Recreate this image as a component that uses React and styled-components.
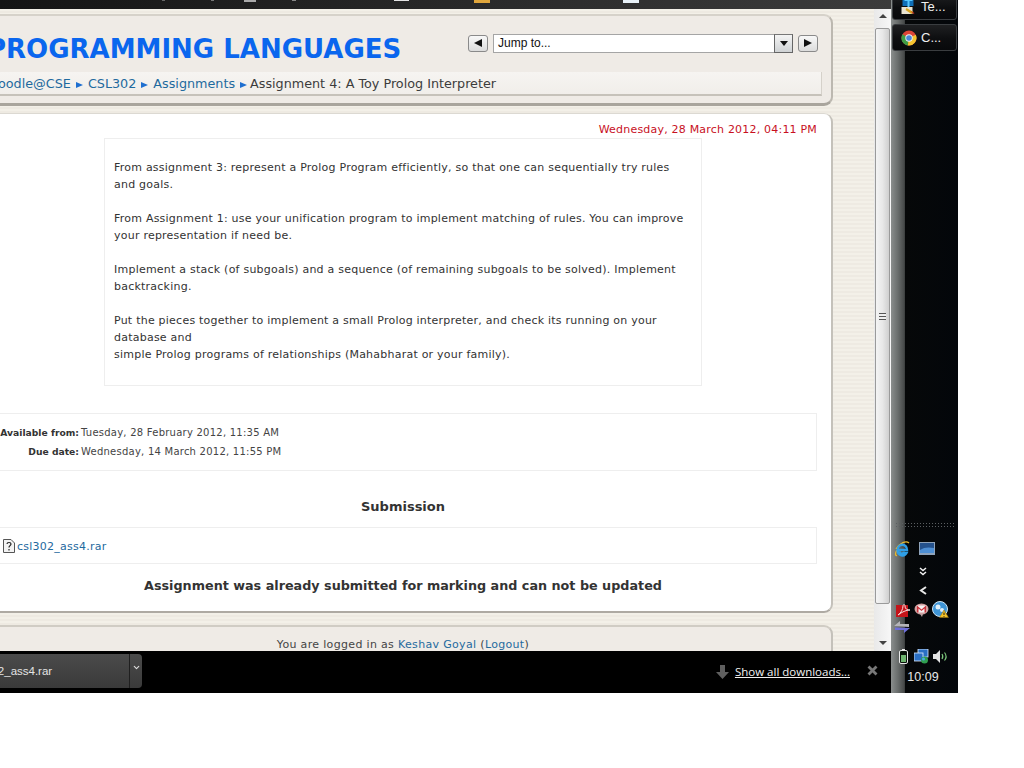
import React from 'react';
import styled, { createGlobalStyle } from 'styled-components';
import { ChevronDown } from 'lucide-react';

const Global = createGlobalStyle`
  html, body { margin: 0; padding: 0; background: #fff; }
  body { font-family: "DejaVu Sans", Verdana, sans-serif; overflow: hidden; }
`;

const Screen = styled.div`
  display: flex;
  width: 958px;
  height: 693px;
  overflow: hidden;
`;

const Browser = styled.div`
  display: flex;
  flex-direction: column;
  width: 891px;
  height: 693px;
`;

const TopStrip = styled.div`
  display: flex;
  flex: none;
  height: 9px;
  background: linear-gradient(90deg, #141414 0%, #262626 45%, #3c3c3c 100%);
  overflow: hidden;
`;

const Speck = styled.span`
  flex: none;
  margin-left: ${({ $gap }) => $gap}px;
  width: ${({ $w }) => $w}px;
  height: ${({ $h }) => $h}px;
  background: ${({ $c }) => $c};
`;

const Viewport = styled.div`
  display: flex;
  flex: none;
  height: 642px;
  background: repeating-linear-gradient(0deg, #f3f0e8 0 2px, #eeeae2 2px 4px);
  overflow: hidden;
`;

const Page = styled.div`
  display: flex;
  flex-direction: column;
  gap: 7px;
  flex: none;
  width: 858px;
  margin-left: -25px;
  margin-right: 41px;
  padding-top: 5px;
`;

const HeaderPanel = styled.div`
  flex: none;
  height: 92px;
  box-sizing: border-box;
  background: #efebe6;
  border-radius: 9px;
  border-top: 2px solid #d6d2ca;
  border-right: 2px solid #bcb8b0;
  border-bottom: 3px solid #a9a59d;
`;

const HeaderTop = styled.div`
  display: flex;
  align-items: center;
  justify-content: space-between;
  height: 56px;
  padding: 0 13px 0 0;
`;

const Title = styled.h1`
  margin: 9px 0 0 12px;
  font-size: 26px;
  line-height: 32px;
  font-weight: 700;
  color: #0a66ee;
  white-space: nowrap;
`;

const JumpRow = styled.div`
  display: flex;
  align-items: center;
  gap: 5px;
  margin-bottom: 2px;
`;

const NavButton = styled.div`
  display: flex;
  align-items: center;
  justify-content: center;
  width: 20px;
  height: 17px;
  box-sizing: border-box;
  border: 1px solid #8a8a8a;
  border-radius: 3px;
  background: linear-gradient(#f8f8f8, #dcdcdc);
`;

const Triangle = styled.span`
  width: 0;
  height: 0;
  border-top: 4px solid transparent;
  border-bottom: 4px solid transparent;
  ${({ $dir }) => ($dir === 'left' ? 'border-right: 8px solid #111;' : 'border-left: 8px solid #111;')}
`;

const JumpSelect = styled.div`
  display: flex;
  justify-content: space-between;
  width: 300px;
  height: 19px;
  box-sizing: border-box;
  border: 1px solid #a5a5a5;
  background: #fff;
  font-family: "Liberation Sans", Arial, sans-serif;
  font-size: 12px;
  line-height: 17px;
  color: #111;
  padding-left: 4px;
`;

const SelectArrow = styled.span`
  display: flex;
  align-items: center;
  justify-content: center;
  width: 17px;
  border: 1px solid #666;
  border-top-color: #777;
  margin: -1px -1px -1px 0;
  background: linear-gradient(#f4f4f4, #cfd2d4);
  &::after {
    content: '';
    border-left: 4px solid transparent;
    border-right: 4px solid transparent;
    border-top: 5px solid #111;
  }
`;

const Breadcrumb = styled.div`
  display: flex;
  align-items: center;
  gap: 5px;
  height: 24px;
  margin-right: 9px;
  box-sizing: border-box;
  padding: 1px 0 0 0;
  background: linear-gradient(#f6f4f1, #f1eeea);
  border-right: 1px solid #d5d1ca;
  border-bottom: 2px solid #c6c2ba;
  font-size: 12.75px;
  white-space: nowrap;
  color: #3c3c3c;
`;

const Crumb = styled.a`
  color: #1f6a9e;
  ${({ $first }) => $first && 'margin-left: 12px;'}
`;

const CurrentCrumb = styled.span`
  margin-left: -2px;
`;

const CrumbSep = styled.span`
  width: 0;
  height: 0;
  margin-top: 2px;
  border-top: 3.5px solid transparent;
  border-bottom: 3.5px solid transparent;
  border-left: 7px solid #1f6fd0;
`;

const MainPanel = styled.div`
  display: flex;
  flex-direction: column;
  align-items: center;
  flex: none;
  height: 500px;
  box-sizing: border-box;
  padding: 0 14px;
  background: #fff;
  border-radius: 9px;
  border-top: 1px solid #dcd9d2;
  border-right: 2px solid #c4c1ba;
  border-bottom: 2px solid #aeaaa3;
`;

const Clock = styled.div`
  align-self: flex-end;
  height: 24px;
  font-size: 11px;
  line-height: 32px;
  letter-spacing: 0.2px;
  color: #c8101e;
`;

const IntroBox = styled.div`
  width: 598px;
  height: 248px;
  box-sizing: border-box;
  padding: 20px 9px 0;
  border: 1px solid #eeeeee;
  font-size: 11px;
  line-height: 17px;
  letter-spacing: 0.23px;
  color: #333;
`;

const Para = styled.p`
  margin: 0 0 17px;
`;

const DatesBox = styled.div`
  display: grid;
  grid-template-columns: 91px auto;
  align-content: center;
  row-gap: 3px;
  width: 100%;
  height: 58px;
  margin-top: 27px;
  box-sizing: border-box;
  border: 1px solid #eeeeee;
  font-size: 10px;
  line-height: 16px;
  letter-spacing: 0.24px;
  color: #444;
`;

const DateLabel = styled.span`
  font-size: 9.2px;
  letter-spacing: 0;
  font-weight: 700;
  color: #333;
  text-align: right;
  white-space: nowrap;
  padding-right: 2px;
`;

const Heading = styled.div`
  margin-top: 27px;
  height: 29px;
  font-size: 13px;
  line-height: 17px;
  font-weight: 700;
  color: #333;
`;

const FileBox = styled.div`
  display: flex;
  align-items: center;
  gap: 2px;
  width: 100%;
  height: 37px;
  padding: 1px 0 0 13px;
  box-sizing: border-box;
  border: 1px solid #eeeeee;
  font-size: 11px;
  letter-spacing: 0.25px;
  color: #1f6a9e;
`;

const Notice = styled.div`
  margin-top: 13px;
  font-size: 12.75px;
  line-height: 17px;
  font-weight: 700;
  color: #333;
`;

const FooterPanel = styled.div`
  flex: none;
  height: 60px;
  margin-top: 5px;
  box-sizing: border-box;
  padding-top: 9px;
  background: #efebe6;
  border-radius: 9px;
  border-top: 2px solid #d0ccc4;
  border-right: 2px solid #c4c1ba;
  font-size: 11px;
  line-height: 17px;
  letter-spacing: 0.33px;
  color: #444;
  text-align: center;
`;

const FooterLink = styled.a`
  color: #1f6a9e;
`;

const Scrollbar = styled.div`
  display: flex;
  flex-direction: column;
  align-items: center;
  flex: none;
  width: 17px;
  height: 642px;
  background: linear-gradient(90deg, #e9e9e9, #f7f7f7);
`;

const ScrollArrow = styled.span`
  flex: none;
  margin-top: ${({ $up }) => ($up ? 5 : 4)}px;
  width: 0;
  height: 0;
  border-left: 4px solid transparent;
  border-right: 4px solid transparent;
  ${({ $up }) => ($up ? 'border-bottom: 4px solid #444;' : 'border-top: 4px solid #444;')}
`;

const ScrollThumb = styled.div`
  display: flex;
  align-items: center;
  justify-content: center;
  flex: none;
  width: 15px;
  height: 576px;
  margin-top: 10px;
  box-sizing: border-box;
  border: 1px solid #9a9a9a;
  border-radius: 2px;
  background: linear-gradient(90deg, #f4f4f4 0%, #e8e8e8 50%, #cfcfcf 100%);
`;

const Grip = styled.span`
  width: 7px;
  height: 7px;
  background: repeating-linear-gradient(#555 0 1px, #eee 1px 3px);
`;

const ScrollTrackEnd = styled.div`
  flex: 1;
`;

const DownloadBar = styled.div`
  display: flex;
  align-items: center;
  flex: none;
  height: 42px;
  background: #000;
  color: #fff;
`;

const DownloadItem = styled.div`
  display: flex;
  align-items: stretch;
  width: 142px;
  height: 34px;
  margin-top: -2px;
  box-sizing: border-box;
  background: linear-gradient(#4b4b4b, #3a3a3a);
  border-radius: 0 4px 4px 0;
`;

const DownloadName = styled.div`
  flex: 1;
  overflow: hidden;
  text-indent: -29px;
  font-size: 11.5px;
  line-height: 34px;
  color: #e4e4e4;
  white-space: nowrap;
  font-family: "Liberation Sans", Arial, sans-serif;
`;

const DownloadMenu = styled.div`
  display: flex;
  justify-content: center;
  align-items: flex-start;
  width: 13px;
  padding-top: 9px;
  box-sizing: border-box;
  border-left: 1px solid #1f1f1f;
  color: #ddd;
`;

const ShowAll = styled.a`
  margin: 0 0 2px 6px;
  font-size: 11.5px;
  color: #f2f2f2;
  text-decoration: underline;
  font-family: "Open Sans", "DejaVu Sans", sans-serif;
`;

const BarRight = styled.div`
  display: flex;
  align-items: center;
  margin-left: auto;
  padding-right: 13px;
`;

const CloseMark = styled.span`
  margin: 0 0 3px 17px;
  display: flex;
`;

const Taskbar = styled.div`
  display: flex;
  flex-direction: column;
  align-items: center;
  flex: none;
  width: 67px;
  height: 693px;
  background: linear-gradient(90deg, #8a8e8d 0%, #6a6e6d 10%, #454848 20%, #060809 21.5%, #03060a 100%);
`;

const TaskButton = styled.div`
  display: flex;
  align-items: center;
  gap: 4px;
  flex: none;
  width: 65px;
  height: ${({ $h }) => $h}px;
  margin-top: ${({ $top }) => $top}px;
  padding-left: 8px;
  box-sizing: border-box;
  border: 1px solid #3a3d40;
  border-radius: 3px;
  background: linear-gradient(#1f2022, #0d0e10 55%, #08090b);
  font-family: "Liberation Sans", Arial, sans-serif;
  font-size: 13px;
  color: #f0f0f0;
  overflow: hidden;
`;

const TaskSpacer = styled.div`
  flex: none;
  height: ${({ $h }) => $h}px;
`;

const GripDots = styled.div`
  flex: none;
  width: 59px;
  height: 6px;
  background-image: radial-gradient(#5b5f62 0.7px, transparent 0.8px);
  background-size: 3px 3px;
`;

const TrayRow = styled.div`
  display: flex;
  align-items: center;
  flex: none;
  gap: ${({ $gap }) => $gap || 3}px;
  width: 100%;
  height: ${({ $h }) => $h}px;
  margin-top: ${({ $top }) => $top || 0}px;
  padding-left: ${({ $left }) => $left}px;
  box-sizing: border-box;
`;

const Time = styled.div`
  flex: none;
  margin-top: 6px;
  font-family: "Liberation Sans", Arial, sans-serif;
  font-size: 12.5px;
  line-height: 14px;
  color: #e8e8e8;
  margin-left: -3px;
`;

const ChromeIcon = () => (
  <svg width="16" height="16" viewBox="0 0 16 16">
    <circle cx="8" cy="8" r="7.5" fill="#dc4437" />
    <path d="M8 8 L1.4 4.2 A7.5 7.5 0 0 0 6.8 15.4 Z" fill="#3f9d45" />
    <path d="M8 8 L14.8 4.8 A7.5 7.5 0 0 1 6.8 15.4 Z" fill="#f4c430" />
    <circle cx="8" cy="8" r="3.7" fill="#f1f1f1" />
    <circle cx="8" cy="8" r="2.8" fill="#4a86d8" />
  </svg>
);

const TermIcon = () => (
  <svg width="16" height="16" viewBox="0 0 15 16">
    <rect x="1" y="0" width="11" height="7" fill="#0f6fb8" />
    <path d="M3 0h8v2H8v6H6V2H3z" fill="#58c8ff" />
    <rect x="0" y="8" width="11" height="7" fill="#e9e4d2" />
    <path d="M5 9l7 4-2 2-6-4z" fill="#d9a521" />
    <path d="M9 12l4 2-1 1z" fill="#c62a1c" />
  </svg>
);

const FileIcon = () => (
  <svg width="12" height="14" viewBox="0 0 12 14">
    <path d="M.5.5h7.5l3.5 3.5v9.500H.5z" fill="#f3f3f3" stroke="#555" />
    <path d="M4 5c0-2 4-2 4 0 0 1.700-2 1.600-2 3.500M6 10v1.500" fill="none" stroke="#222" strokeWidth="1.200" />
  </svg>
);

const IeIcon = () => (
  <svg width="17" height="18" viewBox="0 0 17 18">
    <path d="M15 3C12 0 6 3 2 9" fill="none" stroke="#e8b92d" strokeWidth="1.300" />
    <path d="M3 15.500C1 16 1 13 3 10" fill="none" stroke="#e8b92d" strokeWidth="1.300" />
    <path d="M4 10h9c0-7-9-7-9.500 0 0 6 7 7 9 3h-3c-2 1.500-4 0-4.200-1.500" fill="none" stroke="#2f9fe6" strokeWidth="2.400" />
  </svg>
);

const DesktopIcon = () => (
  <svg width="16" height="14" viewBox="0 0 16 14">
    <rect width="16" height="13" fill="#8fa3ba" />
    <rect x="1" y="1" width="14" height="10" fill="#24518c" />
    <path d="M1 8c4-3 9-3 14-2v5H1z" fill="#4e8fd4" />
  </svg>
);

const DoubleChevron = () => (
  <svg width="8" height="9" viewBox="0 0 8 9">
    <path d="M1 1l3 2.500L7 1M1 5l3 2.500L7 5" fill="none" stroke="#f2f2f2" strokeWidth="1.500" />
  </svg>
);

const LeftChevron = () => (
  <svg width="8" height="9" viewBox="0 0 8 9">
    <path d="M7 1L2 4.500 7 8" fill="none" stroke="#e8e8e8" strokeWidth="2" />
  </svg>
);

const AcrobatIcon = () => (
  <svg width="15" height="14" viewBox="0 0 15 14">
    <rect y="2" width="12" height="12" fill="#c4141a" />
    <path d="M2 12c3-2 5-6 5-9 0-2 2-2 2 0 0 3 2 4 5 4-4 0-8 2-12 5z" fill="none" stroke="#f3dcdc" strokeWidth="1" />
  </svg>
);

const MailIcon = () => (
  <svg width="15" height="14" viewBox="0 0 15 14">
    <ellipse cx="7.500" cy="6" rx="7" ry="5.500" fill="#cfa0a0" />
    <rect x="3" y="2.500" width="9" height="7" fill="#f6f1f1" />
    <path d="M3 2.500l4.500 4 4.500-4V9.500h-1.500V5.500L7.500 8l-3-2.500v4H3z" fill="#c8323a" />
    <path d="M6 11l2 3 1-3z" fill="#bba0a0" />
  </svg>
);

const CloudIcon = () => (
  <svg width="17" height="17" viewBox="0 0 17 17">
    <circle cx="8" cy="8" r="7.500" fill="#3f95d6" stroke="#cfe5f3" />
    <circle cx="6" cy="6" r="2.500" fill="#dff0fa" />
    <circle cx="10" cy="9" r="2" fill="#dff0fa" />
    <path d="M12 9l4.500 7.500h-9z" fill="#f5c228" stroke="#8a6a10" strokeWidth=".5" />
    <path d="M12 11.500v2.500M12 15v.8" stroke="#222" strokeWidth="1" />
  </svg>
);

const TransferIcon = () => (
  <svg width="16" height="14" viewBox="0 0 16 14">
    <path d="M0 6l6-5v3h9v3z" fill="#b4b4b8" />
    <path d="M16 8l-6 5v-3H1V7.500z" fill="#6f6fd8" />
  </svg>
);

const BatteryIcon = () => (
  <svg width="11" height="15" viewBox="0 0 11 15">
    <rect x=".5" y="1.500" width="8" height="13" rx="1.500" fill="#0a120a" stroke="#e8e8e8" />
    <rect x="3" y="0" width="3" height="1.500" fill="#e8e8e8" />
    <rect x="2" y="6" width="5" height="7" fill="#6fb56f" />
  </svg>
);

const NetworkIcon = () => (
  <svg width="15" height="15" viewBox="0 0 15 15">
    <rect x="4" y="0" width="10" height="8" fill="#2a6fc4" stroke="#dfeeff" strokeWidth=".8" />
    <rect x="0" y="4" width="9" height="8" fill="#2a6fc4" stroke="#dfeeff" strokeWidth=".8" />
    <circle cx="10.500" cy="11" r="3.500" fill="#2f9e4f" />
    <circle cx="9.500" cy="10" r="1.500" fill="#4aa8e8" />
  </svg>
);

const SpeakerIcon = () => (
  <svg width="16" height="13" viewBox="0 0 16 13">
    <path d="M0 4h3l4-4v13L3 9H0z" fill="#e4e4e4" />
    <path d="M9 4c1 1.500 1 3.500 0 5M11.500 2.500c2 2.500 2 5.500 0 8" fill="none" stroke="#7cc77c" strokeWidth="1.200" />
  </svg>
);

const DownArrow = () => (
  <svg width="13" height="14" viewBox="0 0 13 14">
    <path d="M4 0h5v7h4l-6.500 7L0 7h4z" fill="#5f5f5f" />
  </svg>
);

const CloseIcon = () => (
  <svg width="11" height="11" viewBox="0 0 11 11">
    <path d="M1.500 1.500l8 8M9.500 1.500l-8 8" stroke="#777" strokeWidth="2.800" />
  </svg>
);

export default function App() {
  return (
    <>
      <Global />
      <Screen>
        <Browser>
          <TopStrip>
            <Speck $gap={162} $w={3} $h={1} $c="#666" />
            <Speck $gap={46} $w={3} $h={1} $c="#777" />
            <Speck $gap={30} $w={12} $h={2} $c="#aaa" />
            <Speck $gap={36} $w={4} $h={1} $c="#888" />
            <Speck $gap={98} $w={15} $h={1} $c="#e4e4e4" />
            <Speck $gap={65} $w={16} $h={3} $c="#e0a63c" />
            <Speck $gap={133} $w={16} $h={3} $c="#e9f2f8" />
          </TopStrip>
          <Viewport>
            <Page>
              <HeaderPanel>
                <HeaderTop>
                  <Title>PROGRAMMING LANGUAGES</Title>
                  <JumpRow>
                    <NavButton><Triangle $dir="left" /></NavButton>
                    <JumpSelect>
                      Jump to...
                      <SelectArrow />
                    </JumpSelect>
                    <NavButton><Triangle $dir="right" /></NavButton>
                  </JumpRow>
                </HeaderTop>
                <Breadcrumb>
                  <Crumb $first>Moodle@CSE</Crumb>
                  <CrumbSep />
                  <Crumb>CSL302</Crumb>
                  <CrumbSep />
                  <Crumb>Assignments</Crumb>
                  <CrumbSep />
                  <CurrentCrumb>Assignment 4: A Toy Prolog Interpreter</CurrentCrumb>
                </Breadcrumb>
              </HeaderPanel>
              <MainPanel>
                <Clock>Wednesday, 28 March 2012, 04:11 PM</Clock>
                <IntroBox>
                  <Para>From assignment 3: represent a Prolog Program efficiently, so that one can sequentially try rules and goals.</Para>
                  <Para>From Assignment 1: use your unification program to implement matching of rules. You can improve your representation if need be.</Para>
                  <Para>Implement a stack (of subgoals) and a sequence (of remaining subgoals to be solved). Implement backtracking.</Para>
                  <Para>Put the pieces together to implement a small Prolog interpreter, and check its running on your database and<br />simple Prolog programs of relationships (Mahabharat or your family).</Para>
                </IntroBox>
                <DatesBox>
                  <DateLabel>Available from:</DateLabel>
                  <span>Tuesday, 28 February 2012, 11:35 AM</span>
                  <DateLabel>Due date:</DateLabel>
                  <span>Wednesday, 14 March 2012, 11:55 PM</span>
                </DatesBox>
                <Heading>Submission</Heading>
                <FileBox>
                  <FileIcon />
                  csl302_ass4.rar
                </FileBox>
                <Notice>Assignment was already submitted for marking and can not be updated</Notice>
              </MainPanel>
              <FooterPanel>
                You are logged in as <FooterLink>Keshav Goyal</FooterLink> (<FooterLink>Logout</FooterLink>)
              </FooterPanel>
            </Page>
            <Scrollbar>
              <ScrollArrow $up />
              <ScrollThumb><Grip /></ScrollThumb>
              <ScrollTrackEnd />
              <ScrollArrow />
              <TaskSpacer $h={6} />
            </Scrollbar>
          </Viewport>
          <DownloadBar>
            <DownloadItem>
              <DownloadName>csl302_ass4.rar</DownloadName>
              <DownloadMenu><ChevronDown size={9} strokeWidth={3} /></DownloadMenu>
            </DownloadItem>
            <BarRight>
              <DownArrow />
              <ShowAll>Show all downloads...</ShowAll>
              <CloseMark><CloseIcon /></CloseMark>
            </BarRight>
          </DownloadBar>
        </Browser>
        <Taskbar>
          <TaskButton $h={27} $top={-7}><TermIcon />Te...</TaskButton>
          <TaskButton $h={27} $top={4}><ChromeIcon />C...</TaskButton>
          <TaskSpacer $h={471} />
          <GripDots />
          <TrayRow $h={18} $top={12} $left={3} $gap={8}><IeIcon /><DesktopIcon /></TrayRow>
          <TrayRow $h={10} $top={8} $left={28}><DoubleChevron /></TrayRow>
          <TrayRow $h={10} $top={9} $left={28}><LeftChevron /></TrayRow>
          <TrayRow $h={17} $top={6} $left={5} $gap={3}><AcrobatIcon /><MailIcon /><CloudIcon /></TrayRow>
          <TrayRow $h={14} $top={2} $left={3}><TransferIcon /></TrayRow>
          <TrayRow $h={16} $top={14} $left={8} $gap={4}><BatteryIcon /><NetworkIcon /><SpeakerIcon /></TrayRow>
          <Time>10:09</Time>
        </Taskbar>
      </Screen>
    </>
  );
}
